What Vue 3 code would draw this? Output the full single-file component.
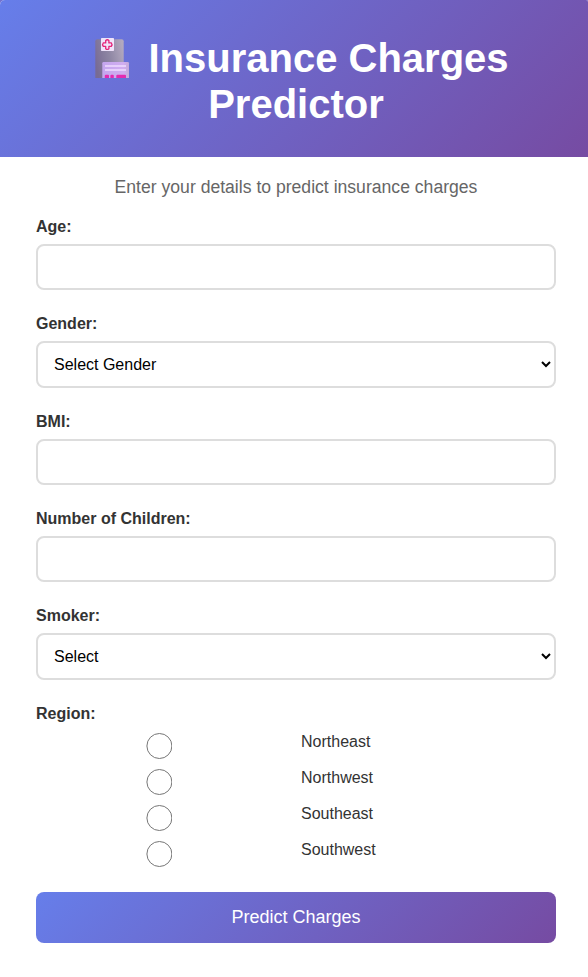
<script setup>
import { ref } from 'vue'

const age = ref('')
const gender = ref('')
const bmi = ref('')
const children = ref('')
const smoker = ref('')
const region = ref('')
const regions = ['Northeast', 'Northwest', 'Southeast', 'Southwest']
</script>

<template>
  <main class="card">
    <header class="header">
      <h1>
        <svg class="logo" viewBox="0 0 36 41" aria-hidden="true">
          <defs>
            <linearGradient id="tower" x1="0" y1="0.6" x2="1" y2="0.3">
              <stop offset="0" stop-color="#786b93" />
              <stop offset="0.5" stop-color="#8e86a3" />
              <stop offset="1" stop-color="#b2a8be" />
            </linearGradient>
            <linearGradient id="annex" x1="0" y1="0" x2="1" y2="0">
              <stop offset="0" stop-color="#c4a6ee" />
              <stop offset="0.8" stop-color="#d1adf0" />
              <stop offset="1" stop-color="#c4a9d8" />
            </linearGradient>
          </defs>
          <path d="M0.3 40V3.300Q0.3 1.300 2.300 1.300H26.700Q28.700 1.300 28.700 3.300V40Z" fill="url(#tower)" />
          <rect x="6" y="0" width="13" height="13" rx="0.7" fill="#efe3fa" />
          <path d="M10.700 2.400Q12.300 1 13.900 2.400V4.900H16.300Q17.700 6.600 16.300 8.300H13.900V10.700Q12.300 12.100 10.700 10.700V8.300H8.300Q6.900 6.600 8.300 4.900H10.700Z" fill="none" stroke="#e52378" stroke-width="1.300" stroke-linejoin="round" />
          <path d="M7.300 40V25.300Q7.300 24 8.600 24H32.700Q34 24 34 25.300V40Z" fill="url(#annex)" />
          <path d="M10 28H31M10 32H31" stroke="#f0dcff" stroke-width="1.500" />
          <path d="M9.800 40v-2.300q0-1 1-1h2.200q1 0 1 1v2.300zM15.400 40v-2.300q0-1 1-1h1.400q1 0 1 1v2.300zM21.300 40v-2.300q0-1 1-1h7.700q1 0 1 1v2.300z" fill="#e32bb0" />
        </svg>
        Insurance Charges Predictor
      </h1>
    </header>

    <form class="form" @submit.prevent>
      <p class="subtitle">Enter your details to predict insurance charges</p>

      <div class="field">
        <label for="age">Age:</label>
        <input id="age" v-model="age" type="number" />
      </div>
      <div class="field">
        <label for="gender">Gender:</label>
        <select id="gender" v-model="gender">
          <option value="">Select Gender</option>
          <option value="male">Male</option>
          <option value="female">Female</option>
        </select>
      </div>
      <div class="field">
        <label for="bmi">BMI:</label>
        <input id="bmi" v-model="bmi" type="number" step="0.1" />
      </div>
      <div class="field">
        <label for="children">Number of Children:</label>
        <input id="children" v-model="children" type="number" />
      </div>
      <div class="field">
        <label for="smoker">Smoker:</label>
        <select id="smoker" v-model="smoker">
          <option value="">Select</option>
          <option value="yes">Yes</option>
          <option value="no">No</option>
        </select>
      </div>

      <div class="region">
        <span class="legend">Region:</span>
        <div class="options">
          <label v-for="name in regions" :key="name" class="option">
            <input v-model="region" type="radio" name="region" :value="name" />
            <span>{{ name }}</span>
          </label>
        </div>
      </div>

      <button type="submit">Predict Charges</button>
    </form>
  </main>
</template>

<style>
body {
  background: #7272cf;
}
</style>

<style scoped>
.card {
  height: 977px;
  overflow: hidden;
  box-sizing: border-box;
  border-radius: 5px 2px 0 0;
  background: #fff;
  color: #333;
  font-family: "Liberation Sans", Arial, sans-serif;
  font-size: 16px;
}

.header {
  box-sizing: border-box;
  height: 157px;
  padding: 35px 36px 0;
  background: linear-gradient(135deg, #667eea 0%, #764ba2 100%);
  color: #fff;
  text-align: center;
}

h1 {
  margin: 0;
  padding-left: 4px;
  font-size: 40px;
  line-height: 46px;
  font-weight: 700;
}

.logo {
  width: 36px;
  height: 41px;
  margin: 0 6.600px 0 11.400px;
  vertical-align: -7px;
}

.form {
  padding: 20px 32px 0 36px;
}

.subtitle {
  margin: 0 0 21px;
  font-size: 17.6px;
  line-height: 20px;
  text-align: center;
  color: #666;
}

.field {
  display: flex;
  flex-direction: column;
  gap: 8px;
  margin-bottom: 25px;
}

.field label,
.legend {
  font-weight: 700;
  line-height: 18px;
}

.field input,
.field select {
  box-sizing: border-box;
  width: 100%;
  height: 46px;
  padding: 12px 14px;
  border: 2px solid #ddd;
  border-radius: 8px;
  background: #fff;
  color: #000;
  font: inherit;
}

.field select {
  height: 47px;
  padding: 12px 0 12px 12px;
}

.legend {
  display: block;
}

.options {
  display: flex;
  flex-direction: column;
  gap: 10px;
  margin-top: 10px;
}

.option {
  display: grid;
  grid-template-columns: 246px 1fr;
  column-gap: 19px;
  height: 26px;
  line-height: 18px;
}

.option input {
  width: 26px;
  height: 26px;
  margin: 0;
  justify-self: center;
  transform: translateX(0.4px);
}

button {
  display: block;
  width: 100%;
  height: 51px;
  margin: 25px 0 0;
  padding: 0;
  border: 0;
  border-radius: 8px;
  background: linear-gradient(135deg, #667eea 0%, #764ba2 100%);
  color: #fff;
  font-family: inherit;
  font-size: 18px;
  cursor: pointer;
}
</style>
